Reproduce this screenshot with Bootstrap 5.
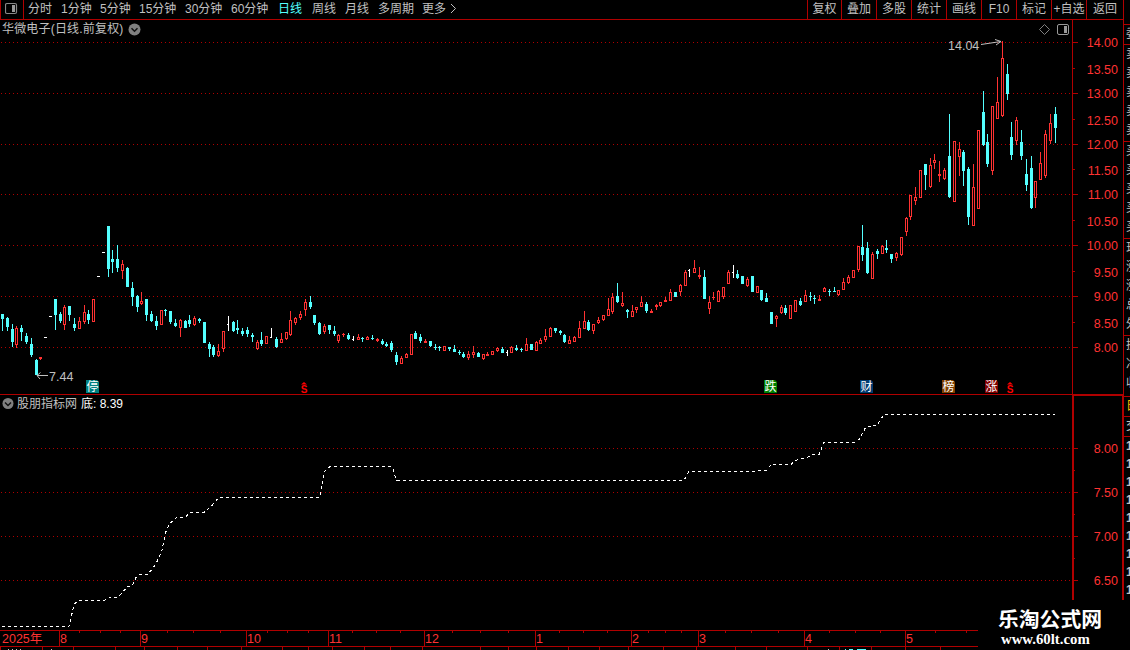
<!doctype html>
<html lang="zh-CN">

<head>
    <meta charset="utf-8">
    <meta name="viewport" content="width=device-width, initial-scale=1">
    <title>华微电子 日线</title>
    <link href="https://cdn.jsdelivr.net/npm/bootstrap@5.3.5/dist/css/bootstrap.min.css" rel="stylesheet">
    <style>
        body {
            width: 1130px;
            height: 650px;
            background: #000;
            color: #c0c0c0;
            font-family: "Liberation Sans", "Noto Sans CJK SC", sans-serif;
            font-size: 12px;
            line-height: 18px;
        }

        svg {
            display: block;
            flex-shrink: 0;
        }

        svg text {
            font-size: 12.5px;
        }

        .workspace {
            width: 1124px;
        }

        .toolbar {
            height: 20px;
            border-bottom: 1px solid #b00000;
            border-right: 1px solid #b00000;
            line-height: 19px;
        }

        .toggle-cell {
            width: 24px;
            border-left: 1px solid #b00000;
            border-right: 1px solid #b00000;
            padding: 2px 0 0 4px;
        }

        .periods {
            display: grid;
            grid-template-columns: 33px 39px 39px 46px 46px 47px 34px 33px 33px 44px 28px 10px;
            padding-left: 4px;
            white-space: nowrap;
        }

        .periods .current {
            color: #54ffff;
        }

        .tools {
            display: grid;
            grid-template-columns: 34px 35px 35px 35px 35px 35px 35px 35px 37px;
            white-space: nowrap;
        }

        .tools span {
            border-left: 1px solid #b00000;
            text-align: center;
        }

        .pane-title {
            position: absolute;
            left: 2px;
            height: 18px;
        }

        .stock-name {
            letter-spacing: .18px;
        }

        .quote-strip {
            width: 6px;
            line-height: 19px;
        }

        .quote-group {
            height: 97px;
            padding-left: 2px;
            border-top: 1px solid #b00000;
        }

        .quote-group div {
            width: 12px;
        }

        .quote-group.one-row {
            height: 20px;
        }

        .quote-group.three-rows {
            height: 61px;
        }

        .quote-group.ones {
            height: 213px;
            line-height: 18px;
            font-weight: bold;
        }

        .site-box {
            width: 146px;
            height: 50px;
            margin-top: -30px;
            background: #000;
            position: relative;
            color: #fff;
            padding: 5px 0 0 20px;
        }

        .site-name {
            font: bold 20.8px/27px "Noto Sans CJK SC", sans-serif;
            white-space: nowrap;
        }

        .site-url {
            font: bold 14.8px/15px "Liberation Serif", serif;
            padding: 0 0 0 3px;
        }
    </style>
</head>

<body class="overflow-hidden">
    <div class="d-flex h-100">
        <div class="workspace flex-shrink-0 d-flex flex-column">
            <div class="toolbar d-flex flex-shrink-0">
                <div class="toggle-cell">
                    <svg width="14" height="13" viewBox="0 0 14 13">
                        <rect x=".5" y="1.5" width="11" height="10" rx="1.5" fill="none" stroke="#888" stroke-width="1.2" />
                        <rect x="7" y="3" width="3" height="7" fill="#999" />
                    </svg>
                </div>
                <div class="periods">
                    <span>分时</span><span>1分钟</span><span>5分钟</span><span>15分钟</span><span>30分钟</span><span>60分钟</span>
                    <span class="current">日线</span><span>周线</span><span>月线</span><span>多周期</span><span>更多</span>
                    <svg width="8" height="18" viewBox="0 0 8 18"><path d="M1 4L5.5 8.5L1 13" fill="none" stroke="#c0c0c0" /></svg>
                </div>
                <div class="tools ms-auto">
                    <span>复权</span><span>叠加</span><span>多股</span><span>统计</span><span>画线</span><span>F10</span><span>标记</span><span>+自选</span><span>返回</span>
                </div>
            </div>

            <div class="position-relative">
                <svg id="priceChart" width="1124" height="375" viewBox="0 20 1124 375"></svg>
                <div class="pane-title top-0 d-flex align-items-center">
                    <span class="stock-name">华微电子(日线.前复权)</span>
                    <svg class="ms-1" width="13" height="13" viewBox="0 0 13 13">
                        <circle cx="6.5" cy="6.5" r="6" fill="#808080" />
                        <path d="M3.5 5.2L6.5 8.2L9.5 5.2" fill="none" stroke="#111" stroke-width="1.5" />
                    </svg>
                </div>
            </div>

            <div class="position-relative">
                <svg id="indicatorChart" width="1124" height="235" viewBox="0 395 1124 235"></svg>
                <div class="pane-title top-0 d-flex align-items-center">
                    <svg width="13" height="13" viewBox="0 0 13 13">
                        <circle cx="6" cy="5.5" r="5.5" fill="#808080" />
                        <path d="M3 4.500L6 7.500L9 4.500" fill="none" stroke="#111" stroke-width="1.5" />
                    </svg>
                    <span class="mx-1" style="margin-left: 2px !important">股朋指标网</span>
                    <span class="text-white">底: 8.39</span>
                </div>
            </div>

            <div class="d-flex">
                <svg id="timeAxis" width="978" height="20" viewBox="0 630 978 20"></svg>
                <div class="site-box flex-shrink-0">
                    <div class="site-name">乐淘公式网</div>
                    <div class="site-url">www.60lt.com</div>
                </div>
            </div>
        </div>

        <div class="quote-strip overflow-hidden">
            <div class="pt-4"></div>
            <div class="quote-group one-row mt-0"><div>委</div></div>
            <div class="quote-group"><div>卖</div><div>卖</div><div>卖</div><div>卖</div><div>卖</div></div>
            <div class="quote-group"><div>买</div><div>买</div><div>买</div><div>买</div><div>买</div></div>
            <div class="quote-group"><div>现</div><div>涨</div><div>涨</div><div>总</div><div>外</div></div>
            <div class="quote-group three-rows"><div>换</div><div>净</div><div>收</div></div>
            <div class="quote-group one-row text-warning"><div>日</div></div>
            <div class="quote-group one-row"><div>交</div></div>
            <div class="quote-group ones"><div>1</div><div>1</div><div>1</div><div>1</div><div>1</div><div>1</div><div>1</div><div>1</div><div>1</div></div>
        </div>
    </div>

    <script>
        const LINE = '#b00000';
        const UP = '#ff3232';
        const DOWN = '#54ffff';

        // x, high, body top, body bottom, low, kind: d = down, u = up, w = unchanged
        const candles = `
2 314 314 319 331 d|7 317 318 327 331 d|12 324 329 342 347 d|16 326 328 345 348 u|21 325 328 332 341 d|26 333 336 342 344 d
31 338 344 355 357 d|36 359 360 375 375 d|40 357 357 359 360 u|45 337 337 338 338 w|50 316 316 317 317 w|55 299 299 315 330 d
60 312 314 321 323 d|64 305 307 325 330 u|69 306 306 315 321 d|74 318 324 328 331 d|79 317 321 329 329 u|84 305 312 322 324 u
88 310 314 320 324 d|93 299 299 322 322 u|98 276 276 277 277 w|103 252 252 253 253 w|108 226 226 269 277 d|112 250 259 262 273 d
117 245 259 268 272 d|122 260 264 271 279 u|127 267 268 287 287 d|132 282 288 297 306 d|137 295 296 307 312 d|141 292 301 304 305 u
146 299 299 315 321 d|151 311 314 321 322 d|156 316 321 326 330 d|161 310 310 325 325 u|165 309 310 311 316 d|170 311 311 322 324 d
175 319 323 326 327 d|180 319 320 328 337 u|185 320 321 328 328 d|189 315 320 324 327 d|194 316 318 325 326 u|199 318 319 321 323 d
204 322 322 343 343 d|209 342 344 349 357 d|213 345 347 355 357 d|218 344 351 356 357 u|223 331 331 349 352 u|228 316 324 325 331 w
233 321 322 331 332 d|237 320 328 330 334 d|242 328 331 334 336 d|247 327 330 334 337 d|252 333 335 337 342 d|257 340 342 349 350 u
261 332 340 344 346 d|266 336 336 344 344 u|271 328 337 338 338 w|276 337 339 347 348 d|281 333 339 343 343 u|286 332 332 339 340 u
290 311 320 335 336 u|295 317 318 323 325 u|300 311 314 318 320 u|305 299 302 310 316 u|310 296 302 307 309 d|314 315 315 323 325 d
319 322 323 334 335 d|324 324 326 332 334 u|329 325 325 330 334 d|334 326 331 334 336 d|338 334 335 341 343 u|343 333 334 335 337 u
348 333 335 339 340 d|353 336 339 340 341 w|358 334 337 340 340 u|362 337 338 339 342 d|367 336 337 340 340 u|372 335 338 339 340 d
377 338 339 341 342 u|382 339 341 344 345 d|386 342 344 346 347 d|391 341 343 350 352 d|396 352 355 362 365 d|401 356 358 364 364 u
406 353 354 358 358 u|411 334 334 355 355 u|415 331 333 339 339 d|420 334 337 341 343 d|425 339 341 343 343 u|430 341 341 346 347 d
435 344 347 348 350 d|439 346 347 348 351 d|444 346 346 351 351 u|449 347 347 349 351 d|454 345 349 352 352 d|459 350 352 353 355 d
463 352 354 357 358 d|468 351 354 358 360 u|473 346 352 355 358 u|478 352 353 357 357 d|483 354 354 359 360 u|487 352 354 356 356 u
492 351 351 355 355 u|497 347 348 351 352 u|502 347 349 353 353 d|507 350 352 353 356 w|511 346 347 353 353 u|516 345 348 350 351 d
521 348 349 350 352 d|526 338 344 351 351 u|531 344 344 350 350 d|536 341 342 351 351 u|540 338 340 344 344 u|545 329 336 340 342 u
550 327 328 337 337 u|555 328 328 331 333 d|560 330 331 333 335 d|564 334 335 342 343 d|569 336 340 344 344 u|574 336 337 342 342 u
579 321 328 338 338 u|584 311 321 329 329 u|588 320 322 330 331 d|593 324 324 331 334 u|598 317 320 323 324 u|603 315 315 320 321 u
608 298 309 316 316 u|612 293 297 312 314 u|617 283 296 302 303 d|622 292 303 306 307 u|627 309 310 312 318 d|632 305 311 317 317 u
636 307 307 310 313 u|641 296 302 307 307 u|646 302 304 311 313 d|651 309 311 313 313 u|656 304 305 307 310 u|660 302 302 306 307 u
665 297 300 302 302 u|670 289 292 301 301 u|675 292 292 297 297 d|680 284 285 292 296 u|685 270 272 286 286 u|689 269 270 271 277 w
694 260 268 273 273 u|699 267 275 277 279 u|704 270 277 299 299 d|709 296 302 309 314 u|713 292 297 298 300 u|718 290 291 302 302 u
723 287 287 297 299 u|728 270 272 284 284 u|733 265 272 273 278 w|737 270 274 278 279 d|742 276 276 284 284 d|747 277 279 286 287 u
752 276 276 292 292 d|757 286 286 293 293 u|761 290 290 300 301 d|766 293 298 302 302 d|771 312 312 324 324 d|776 315 316 319 327 u
781 305 307 313 314 u|785 305 308 313 315 d|790 305 305 319 319 u|795 300 300 312 312 u|800 298 301 305 306 d|805 290 295 302 302 u
810 292 296 297 301 d|814 295 298 299 304 d|819 295 299 301 301 u|824 287 288 292 292 u|829 289 291 292 296 d|834 287 291 292 292 d
838 290 290 295 296 u|843 278 282 290 290 u|848 275 277 283 284 u|853 270 270 278 278 u|858 246 246 270 272 u|862 225 247 255 261 d
867 242 248 273 274 d|872 252 254 279 279 u|877 249 251 254 259 d|882 245 246 254 254 u|886 240 248 250 253 d|891 254 254 259 263 d
896 252 253 258 261 u|901 237 237 255 256 u|906 217 218 232 236 u|910 195 195 217 220 u|915 187 197 201 205 u|920 170 170 198 198 u
925 164 164 175 190 d|930 158 165 187 188 u|934 154 160 163 169 u|939 161 174 176 182 u|944 168 170 179 180 u|949 114 156 197 198 d
954 141 141 202 202 u|959 142 149 157 176 u|963 150 152 171 186 d|968 167 169 217 225 d|973 164 187 226 226 u|978 130 130 209 209 u
983 91 112 145 146 d|987 134 142 164 167 d|992 106 106 171 175 u|997 77 102 119 119 u|1002 41 58 116 117 u|1007 64 74 94 100 d
1011 122 137 155 160 d|1016 117 120 141 145 u|1021 130 142 156 160 d|1026 159 174 185 191 d|1031 156 168 208 209 d|1035 181 181 198 208 u
1040 152 163 180 180 u|1045 130 134 176 178 u|1050 114 123 141 144 u|1055 107 114 128 143 d`.trim().split(/[|\n]/);

        function rect(x, y, w, h, color) {
            return `<rect x="${x}" y="${y}" width="${w}" height="${h}" fill="${color}"/>`;
        }

        function gridLine(y) {
            return `<path d="M1 ${y + .5}H1072" stroke="${LINE}" stroke-dasharray="1 3" shape-rendering="crispEdges"/>` + rect(1073, y, 5, 1, LINE);
        }

        function priceLabel(y, value) {
            return `<text x="1118" y="${y + 5}" text-anchor="end" fill="${UP}">${value.toFixed(2)}</text>`;
        }

        function drawCandle(row) {
            const c = row.split(' ');
            const [x, high, top, bottom, low] = c.slice(0, 5).map(Number);
            if (c[5] === 'w') {
                const flat = high + 1 === low;
                return rect(x, high, 1, low - high, '#fff') + rect(x - 1, top, flat ? 3 : 2, 1, '#fff');
            }
            const color = c[5] === 'u' ? UP : DOWN;
            let out = rect(x, high, 1, low - high, color) + rect(x - 1, top, 3, bottom - top, color);
            if (c[5] === 'u' && bottom - top > 2) {
                out += rect(x, top + 1, 1, bottom - top - 2, '#000');
            }
            return out;
        }

        function badge(x, label, color) {
            return `<path d="M${x} 380h11l2 2v11h-13z" fill="${color}"/>` +
                `<text x="${x + .5}" y="391" fill="#fff" style="font-size:12px">${label}</text>`;
        }

        function dividend(x) {
            return `<path d="M${x} 384.500l3 -2.500l3 2.500z" fill="#f00"/><text x="${x - .3}" y="393" fill="#f00" font-weight="bold" style="font-size:10px">S</text>`;
        }

        // price pane
        let price = '';
        [42, 93, 144, 194, 245, 296, 347].forEach(function(y, i) {
            price += gridLine(y) + priceLabel(y, 14 - i);
        });
        [68, 119, 169, 220, 271, 322].forEach(function(y, i) {
            price += rect(1073, y, 2, 1, LINE) + priceLabel(y + 1, 13.5 - i);
        });
        price += candles.map(drawCandle).join('');
        price += rect(1072, 20, 1, 375, LINE) + rect(1123, 20, 1, 375, LINE) + rect(0, 394, 1124, 1, LINE);
        price += '<g fill="none" stroke="#c0c0c0"><path d="M48 375.5H37M40.500 372.500L37 375.500L40 379"/><path d="M981 44.500L1001 41.500M995 39.500L1001 41.500L996 45"/></g>';
        price += '<text x="49" y="381" fill="#c0c0c0">7.44</text><text x="948" y="50" fill="#c0c0c0">14.04</text>';
        price += badge(86, '停', '#008080') + badge(764, '跌', '#008000') + badge(860, '财', '#003a70') + badge(942, '榜', '#804000') + badge(985, '涨', '#800000');
        price += dividend(301) + dividend(1007);
        price += '<path d="M1044.500 24.500L1049.500 29.500L1044.500 34.500L1039.500 29.500Z" fill="none" stroke="#808080"/>';
        price += '<rect x="1057.500" y="24.500" width="11" height="10" rx="1.500" fill="none" stroke="#999"/>' + rect(1064, 26, 3, 7, '#999');
        document.getElementById('priceChart').innerHTML = price;

        // indicator pane
        let indicator = '';
        [448, 492, 536, 580].forEach(function(y, i) {
            indicator += gridLine(y) + priceLabel(y, 8 - i * .5);
        });
        [470, 514, 558].forEach(function(y) {
            indicator += rect(1073, y, 2, 1, LINE);
        });
        indicator += rect(1072, 395, 52, 1, LINE) + rect(1072, 395, 2, 205, LINE) + rect(1122, 395, 2, 205, LINE);
        indicator += '<polyline fill="none" stroke="#fff" stroke-dasharray="3 3" shape-rendering="crispEdges" transform="translate(0 .5)" points="2,626 69,626 70,622 74,604 77,601 80,600 104,600 110,597 118,597 123,591 128,586 132,586 136,577 140,574 147,574 152,569 156,563 159,557 162,550 164,540 165,534 167,528 170,523 173,520 177,517 185,517 190,512 204,512 212,505 218,498 220,497 320,497 321,490 323,479 324,472 328,467 331,466 391,466 393,468 394,473 397,480 681,480 685,478 689,471 755,471 757,470 766,470 771,464 791,464 795,460 807,457 812,454 819,454 821,449 824,442 855,442 859,439 863,432 866,426 877,425 880,420 884,414 1055,414"/>';
        document.getElementById('indicatorChart').innerHTML = indicator;

        // time axis
        let axis = rect(0, 630, 978, 1, LINE) + rect(0, 646, 978, 1, LINE);
        axis += `<text x="2" y="643" fill="${UP}">2025年</text>`;
        [[59, 8], [140, 9], [246, 10], [328, 11], [424, 12], [535, 1], [631, 2], [698, 3], [804, 4], [905, 5]].forEach(function(m) {
            axis += rect(m[0], 630, 1, 16, LINE) + `<text x="${m[0] + 1}" y="643" fill="${UP}">${m[1]}</text>`;
        });
        [79, 100, 120, 167, 193, 220, 267, 287, 308, 352, 376, 400, 452, 480, 508, 559, 583, 607, 648, 665, 681, 725, 751, 778, 829, 855, 880, 935, 966].forEach(function(x) {
            axis += rect(x, 631, 1, 2, LINE);
        });
        [0, 42, 73, 115, 144, 177, 207, 241, 282, 308, 332, 364, 390, 422, 480, 508, 536, 568, 599, 628, 663, 696, 735, 766, 807, 839, 871, 905, 940].forEach(function(x) {
            axis += rect(x, 647, 1, 3, LINE);
        });
        [8, 12, 16, 20, 51, 828].forEach(function(x) {
            axis += rect(x, 649, 1, 1, '#c0c0c0');
        });
        axis += rect(845, 649, 1, 1, DOWN) + rect(849, 649, 4, 1, DOWN) + rect(857, 649, 9, 1, DOWN);
        document.getElementById('timeAxis').innerHTML = axis;
    </script>

    <script src="https://cdn.jsdelivr.net/npm/bootstrap@5.3.5/dist/js/bootstrap.bundle.min.js"></script>
</body>

</html>
